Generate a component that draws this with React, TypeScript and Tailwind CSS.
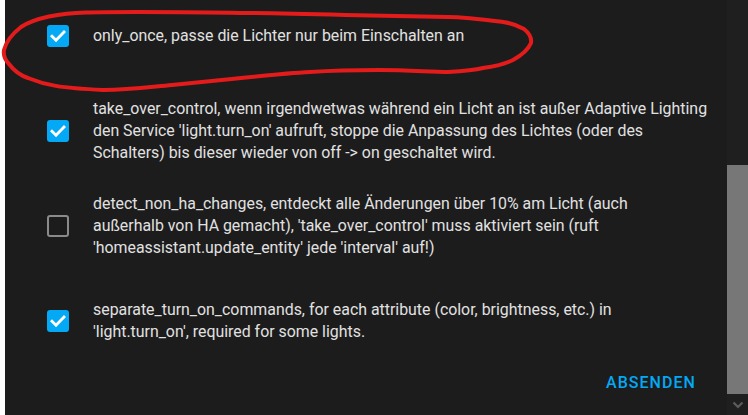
import React from "react";

const items = [
  { checked: true, lines: ["only_once, passe die Lichter nur beim Einschalten an"] },
  {
    checked: true,
    lines: [
      "take_over_control, wenn irgendwetwas während ein Licht an ist außer Adaptive Lighting",
      "den Service 'light.turn_on' aufruft, stoppe die Anpassung des Lichtes (oder des",
      "Schalters) bis dieser wieder von off -> on geschaltet wird.",
    ],
  },
  {
    checked: false,
    lines: [
      "detect_non_ha_changes, entdeckt alle Änderungen über 10% am Licht (auch",
      "außerhalb von HA gemacht), 'take_over_control' muss aktiviert sein (ruft",
      "'homeassistant.update_entity' jede 'interval' auf!)",
    ],
  },
  {
    checked: true,
    lines: [
      "separate_turn_on_commands, for each attribute (color, brightness, etc.) in",
      "'light.turn_on', required for some lights.",
    ],
  },
];

function Box({ checked }: { checked: boolean }) {
  if (checked) {
    return (
      <div className="w-[22px] h-[22px] shrink-0 rounded-[3px] bg-[#03a9f4] flex items-center justify-center">
        <svg width="22" height="22" viewBox="0 0 22 22">
          <path d="M5 11.3 L9 15.2 L17 7" fill="none" stroke="#ffffff" strokeWidth="2.8" strokeLinecap="square" />
        </svg>
      </div>
    );
  }
  return <div className="w-[22px] h-[22px] shrink-0 rounded-[3px] border-[2.5px] border-[#8a8a8a]" />;
}

export default function App() {
  return (
    <div className="relative w-[748px] h-[415px] bg-white flex overflow-hidden" style={{ fontFamily: "Roboto, 'Liberation Sans', sans-serif" }}>
      <div className="w-[5px] shrink-0 bg-white" />
      <div className="flex-1 bg-[#1c1c1c] flex flex-col">
        <div className="-mt-[12px] flex flex-col">
          {items.map((it, i) => (
            <div key={i} className="h-[95px] flex items-center pl-[42px]">
              <Box checked={it.checked} />
              <div className="ml-[24px] text-[15.9px] leading-[22px] text-[#e1e1e1]">
                {it.lines.map((l, j) => (
                  <div key={j} className="whitespace-nowrap">{l}</div>
                ))}
              </div>
            </div>
          ))}
        </div>
        <div className="flex justify-end pr-[31px] mt-[7px]">
          <span className="text-[16px] leading-[16px] font-medium tracking-[1.05px] text-[#03a9f4]">ABSENDEN</span>
        </div>
      </div>
      <div className="w-[21px] shrink-0 bg-[#1f1f1f] flex flex-col">
        <div className="h-[165px]" />
        <div className="h-[229px] bg-[#777777]" />
        <div className="flex-1 flex items-center justify-center">
          <svg width="12" height="8" viewBox="0 0 12 8">
            <path d="M1.5 1.5 L6 6 L10.5 1.5" fill="none" stroke="#5c5c5c" strokeWidth="2.2" />
          </svg>
        </div>
      </div>
      <svg className="absolute left-0 top-0 pointer-events-none" width="748" height="415" viewBox="0 0 748 415">
        <path
          d="M86 12.5 C 60 13, 35 18, 21 27 C 12 34, 6 42, 4 50 C 3 56, 5 60, 9 64 C 15 72, 22 76, 28 78 C 45 85, 60 88, 103 90 C 130 90, 150 87, 172 85 C 200 82, 220 80, 241 78 C 270 75, 290 73, 310 72 C 340 70, 360 70, 379 70 C 410 70, 430 72, 448 72 C 465 71, 475 70, 483 68 C 497 66, 505 64, 513 60 C 522 55, 528 50, 531 43 C 532 37, 529 33, 524 29 C 517 25, 510 23, 503 22 C 480 19, 465 17, 448 17 C 410 16, 380 16, 345 15 C 310 14, 270 13, 241 13 C 200 12, 170 12, 138 12 C 115 12, 100 12, 86 12.5 Z"
          fill="none"
          stroke="#e31b1b"
          strokeWidth="4"
          strokeLinejoin="round"
        />
      </svg>
    </div>
  );
}
